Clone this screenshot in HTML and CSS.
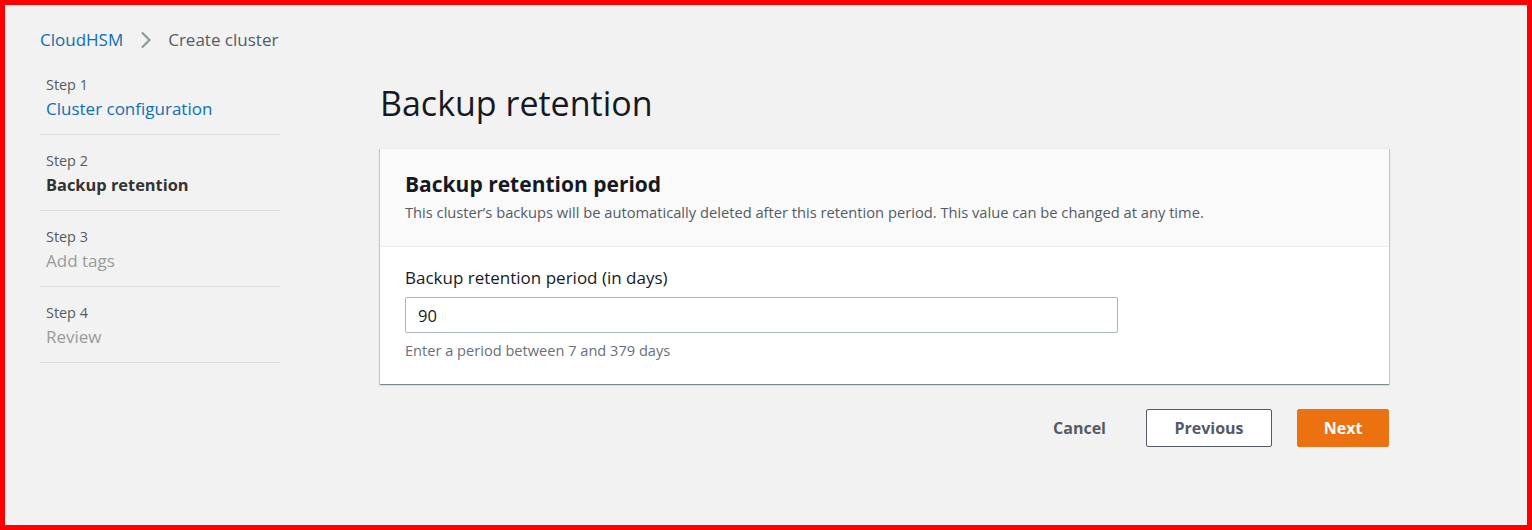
FILE: index.html
```html
<!DOCTYPE html>
<html lang="en">
<head>
<meta charset="utf-8">
<title>Create cluster - Backup retention</title>
<link rel="stylesheet" href="styles.css">
</head>
<body>
<div class="frame">
  <nav class="breadcrumb">
    <a class="crumb-link" href="#">CloudHSM</a>
    <svg class="chev" width="12" height="18" viewBox="0 0 12 18" aria-hidden="true"><path d="M2 1.5 L9.5 9 L2 16.5" fill="none" stroke="#879596" stroke-width="2"/></svg>
    <span class="crumb-current">Create cluster</span>
  </nav>
  <div class="layout">
    <ol class="steps">
      <li class="step">
        <span class="step-label">Step 1</span>
        <a class="step-title link" href="#">Cluster configuration</a>
      </li>
      <li class="step">
        <span class="step-label">Step 2</span>
        <span class="step-title current">Backup retention</span>
      </li>
      <li class="step">
        <span class="step-label">Step 3</span>
        <span class="step-title disabled">Add tags</span>
      </li>
      <li class="step">
        <span class="step-label">Step 4</span>
        <span class="step-title disabled">Review</span>
      </li>
    </ol>
    <main class="content">
      <h1 class="page-title">Backup retention</h1>
      <section class="card">
        <header class="card-header">
          <h2 class="card-title">Backup retention period</h2>
          <p class="card-desc">This cluster’s backups will be automatically deleted after this retention period. This value can be changed at any time.</p>
        </header>
        <div class="card-body">
          <label class="field-label" for="days">Backup retention period (in days)</label>
          <input class="field-input" id="days" type="text" value="90">
          <p class="field-hint">Enter a period between 7 and 379 days</p>
        </div>
      </section>
      <div class="actions">
        <button class="btn btn-link">Cancel</button>
        <button class="btn btn-normal">Previous</button>
        <button class="btn btn-primary">Next</button>
      </div>
    </main>
  </div>
</div>
</body>
</html>
```
FILE: styles.css
```css
* { box-sizing: border-box; }
html, body { margin: 0; padding: 0; }
body {
  font-family: "Open Sans", "Noto Sans", Arial, sans-serif;
  color: #16191f;
}
.frame {
  width: 1532px;
  height: 530px;
  border: 5px solid #ff0000;
  background: #f2f2f2;
  padding: 23px 0 0 35px;
}
.breadcrumb {
  display: flex;
  align-items: center;
  height: 24px;
  font-size: 17px;
  line-height: 24px;
}
.crumb-link { color: #0f6fb3; text-decoration: none; }
.chev { margin: 0 16px 0 17px; }
.crumb-current { color: #545b64; }

.layout {
  display: grid;
  grid-template-columns: 240px 1009px;
  column-gap: 100px;
  margin-top: 7px;
}
.steps { list-style: none; margin: 0; padding: 0; }
.step {
  display: flex;
  flex-direction: column;
  padding: 15px 0 13px 6px;
  border-bottom: 1px solid #dcdcdc;
}
.step-label {
  font-size: 14.4px;
  line-height: 22px;
  color: #545b64;
}
.step-title {
  margin-top: 1px;
  font-size: 17px;
  line-height: 24px;
  text-decoration: none;
}
.step-title.link { color: #0f6fb3; }
.step-title.current { color: #333; font-weight: 700; font-size: 16.4px; }
.step-title.disabled { color: #9a9a9a; }

.content { display: flex; flex-direction: column; }
.page-title {
  margin: 22px 0 23px 0;
  font-size: 34px;
  line-height: 44px;
  font-weight: 400;
  color: #16191f;
}
.card {
  background: #fff;
  border-top: 1px solid #eaeded;
  box-shadow: 0 1px 1px 0 rgba(0, 28, 36, 0.3), 1px 1px 1px 0 rgba(0, 28, 36, 0.15), -1px 1px 1px 0 rgba(0, 28, 36, 0.15);
}
.card-header {
  background: #fafafa;
  padding: 21px 25px 24px;
  border-bottom: 1px solid #eaeded;
}
.card-title {
  margin: 0 0 4px;
  font-size: 21px;
  line-height: 28px;
  font-weight: 700;
  color: #16191f;
}
.card-desc {
  margin: 0;
  font-size: 14.7px;
  line-height: 20px;
  color: #545b64;
}
.card-body {
  display: flex;
  flex-direction: column;
  align-items: flex-start;
  padding: 20px 25px 24px;
}
.field-label {
  font-size: 17px;
  line-height: 22px;
  color: #16191f;
}
.field-input {
  margin-top: 8px;
  width: 713px;
  height: 36px;
  border: 1px solid #aab7b8;
  border-radius: 2px;
  padding: 0 12px;
  font-family: inherit;
  font-size: 16.5px;
  color: #16191f;
  background: #fff;
}
.field-hint {
  margin: 7px 0 0;
  font-size: 14.6px;
  line-height: 20px;
  color: #687078;
}
.actions {
  display: flex;
  justify-content: flex-end;
  align-items: center;
  gap: 25px;
  margin-top: 25px;
}
.btn {
  height: 38px;
  font-family: inherit;
  font-size: 16px;
  font-weight: 700;
  border-radius: 2px;
  cursor: pointer;
}
.btn-link {
  background: transparent;
  border: 1px solid transparent;
  color: #545b64;
  padding: 0 14px;
  margin-right: 0;
}
.btn-normal {
  width: 126px;
  background: #fff;
  border: 1px solid #545b64;
  color: #545b64;
}
.btn-primary {
  width: 92px;
  background: #ec7211;
  border: 1px solid #ec7211;
  color: #fff;
}
```
